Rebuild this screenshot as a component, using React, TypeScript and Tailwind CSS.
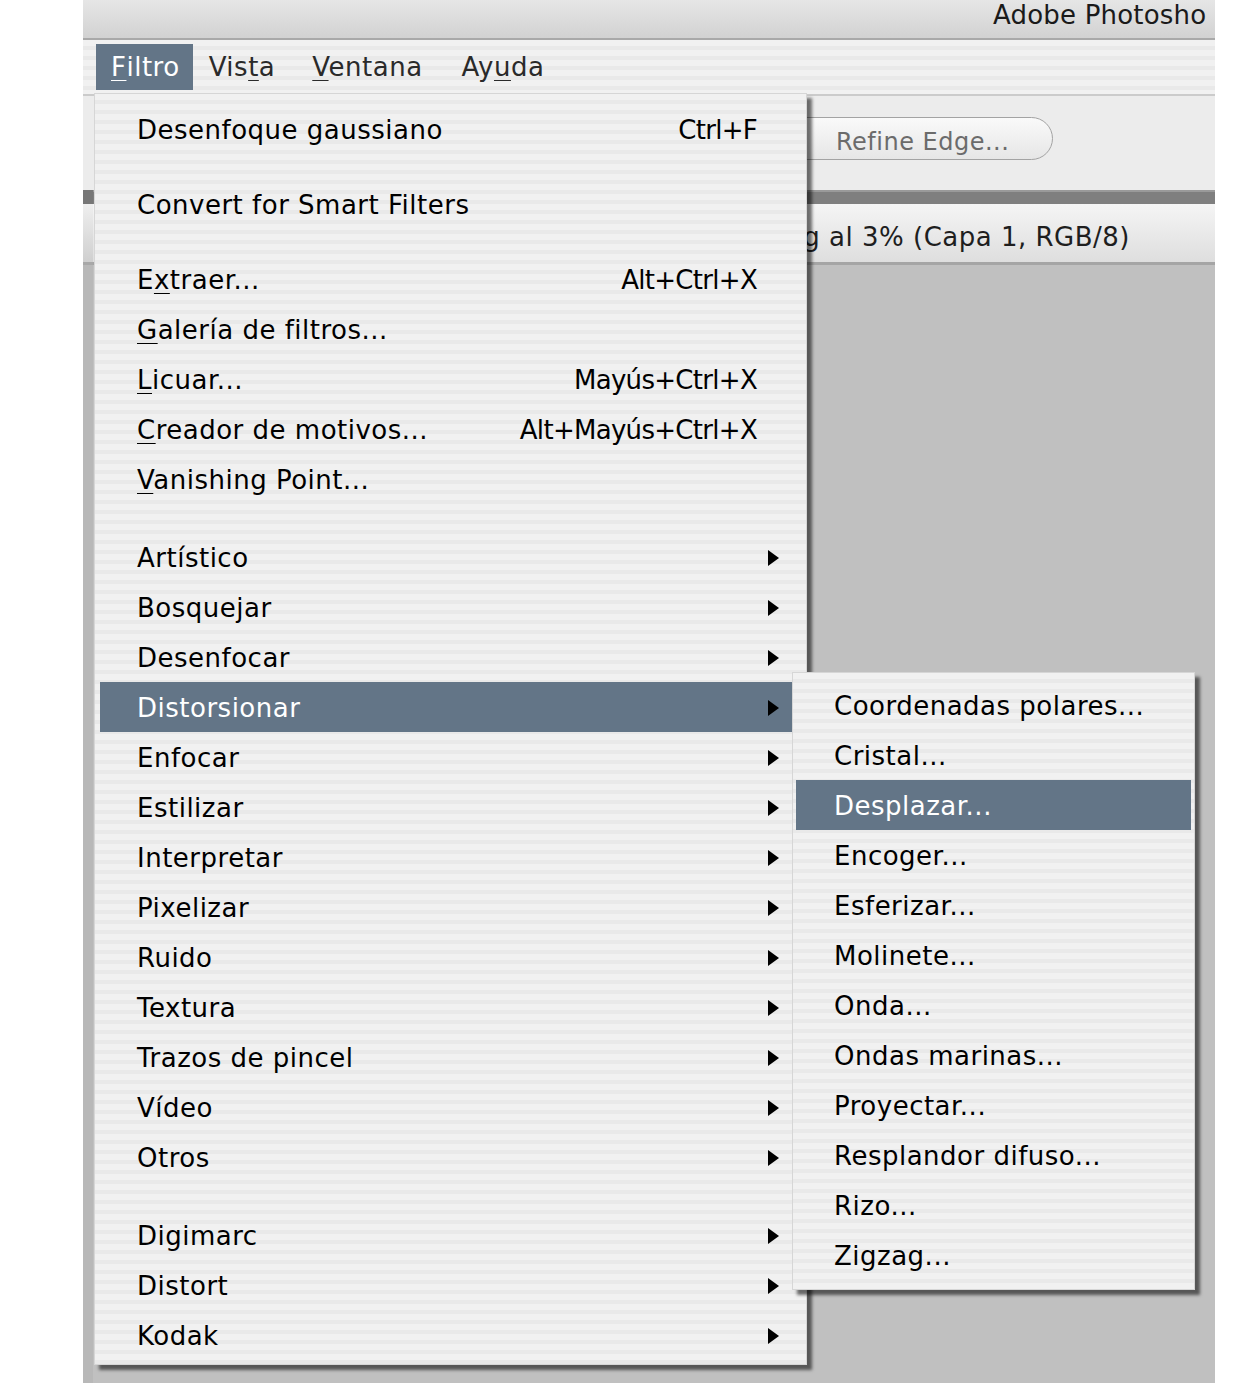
import React from "react";

type Item = { label: React.ReactNode; shortcut?: string; sub?: boolean; active?: boolean };

function Arrow() {
  return (
    <svg width="11" height="16" viewBox="0 0 11 16">
      <path d="M0 0 L11 8 L0 16 Z" fill="#000" />
    </svg>
  );
}

function U({ children }: { children: React.ReactNode }) {
  return <span className="underline decoration-1 underline-offset-[4px]">{children}</span>;
}

const mainItems: (Item | "sep" | "sep2")[] = [
  { label: "Desenfoque gaussiano", shortcut: "Ctrl+F" },
  "sep",
  { label: "Convert for Smart Filters" },
  "sep",
  { label: <>E<U>x</U>traer...</>, shortcut: "Alt+Ctrl+X" },
  { label: <><U>G</U>alería de filtros...</> },
  { label: <><U>L</U>icuar...</>, shortcut: "Mayús+Ctrl+X" },
  { label: <><U>C</U>reador de motivos...</>, shortcut: "Alt+Mayús+Ctrl+X" },
  { label: <><U>V</U>anishing Point...</> },
  "sep2",
  { label: "Artístico", sub: true },
  { label: "Bosquejar", sub: true },
  { label: "Desenfocar", sub: true },
  { label: "Distorsionar", sub: true, active: true },
  { label: "Enfocar", sub: true },
  { label: "Estilizar", sub: true },
  { label: "Interpretar", sub: true },
  { label: "Pixelizar", sub: true },
  { label: "Ruido", sub: true },
  { label: "Textura", sub: true },
  { label: "Trazos de pincel", sub: true },
  { label: "Vídeo", sub: true },
  { label: "Otros", sub: true },
  "sep2",
  { label: "Digimarc", sub: true },
  { label: "Distort", sub: true },
  { label: "Kodak", sub: true },
];

const subItems: Item[] = [
  { label: "Coordenadas polares..." },
  { label: "Cristal..." },
  { label: "Desplazar...", active: true },
  { label: "Encoger..." },
  { label: "Esferizar..." },
  { label: "Molinete..." },
  { label: "Onda..." },
  { label: "Ondas marinas..." },
  { label: "Proyectar..." },
  { label: "Resplandor difuso..." },
  { label: "Rizo..." },
  { label: "Zigzag..." },
];

export default function App() {
  return (
    <div className="min-h-[1396px] bg-white font-['DejaVu_Sans',sans-serif] text-[26px] tracking-[0.5px] text-black">
      <div className="relative ml-[83px] flex h-[1383px] w-[1132px] flex-col overflow-hidden">
        {/* title bar */}
        <div className="h-[38px] shrink-0 whitespace-nowrap bg-gradient-to-b from-[#e6e6e6] to-[#d2d2d2] pl-[910px] leading-[30px] tracking-[0.2px] text-[#1a1a1a]">
          Adobe Photosho
        </div>
        <div className="h-[2px] shrink-0 bg-[#a9a9a9]" />

        {/* menu bar */}
        <div className="flex h-[54px] shrink-0 items-center bg-[repeating-linear-gradient(to_bottom,#f1f1f1_0px,#f1f1f1_6px,#e9e9e9_6px,#e9e9e9_10px)] text-[#2a2a2a]">
          <div className="ml-[13px] flex h-[46px] items-center bg-[#637587] pl-[15px] pr-[13px] text-white">
            <U>F</U>iltro
          </div>
          <div className="pl-[16px] pr-[37px]">
            Vis<U>t</U>a
          </div>
          <div className="pr-[39px]">
            <U>V</U>entana
          </div>
          <div>
            Ay<U>u</U>da
          </div>
        </div>
        <div className="h-[2px] shrink-0 bg-[#cbcbcb]" />

        {/* workspace */}
        <div className="flex flex-1">
          <div className="flex w-[10px] flex-col">
            <div className="h-[94px] bg-[#ececec]" />
            <div className="h-[14px] bg-[#777777]" />
            <div className="h-[58px] bg-gradient-to-b from-[#efefef] to-[#cfcfcf]" />
            <div className="h-[3px] bg-[#a8a8a8]" />
            <div className="flex-1 bg-[#b8b8b8]" />
          </div>
          <div className="flex flex-1 flex-col">
            <div className="h-[94px] bg-[#ececec] pt-[21px]">
              <div className="ml-[627px] flex h-[43px] w-[333px] items-center rounded-r-full border border-[#a3a3a3] bg-gradient-to-b from-[#fafafa] to-[#e6e6e6] pl-[115px] pt-[6px] text-[24px] text-[#6b6b6b]">
                Refine Edge...
              </div>
            </div>
            <div className="h-[14px] border-t-2 border-[#9a9a9a] bg-[#7f7f7f]" />
            <div className="flex h-[58px] items-center justify-end whitespace-nowrap bg-gradient-to-b from-[#f5f5f5] to-[#dedede] pr-[85px] pt-[8px] text-[#1e1e1e]">
              Sin título-1.jpg al 3% (Capa 1, RGB/8)
            </div>
            <div className="h-[3px] bg-[#a5a5a5]" />
            <div className="flex-1 bg-[#c0c0c0]" />
          </div>
        </div>

        {/* main Filtro menu */}
        <div className="absolute left-[11px] top-[93px] w-[713px] border border-[#d6d6d6] bg-[repeating-linear-gradient(to_bottom,#f1f1f1_0px,#f1f1f1_6px,#e9e9e9_6px,#e9e9e9_10px)] pb-[4px] pt-[10px] shadow-[5px_5px_3px_rgba(0,0,0,0.55)]">
          {mainItems.map((it, i) => {
            if (it === "sep") return <div key={i} className="h-[25px]" />;
            if (it === "sep2") return <div key={i} className="h-[28px]" />;
            return (
              <div
                key={i}
                className={
                  it.active
                    ? "mx-[5px] flex h-[50px] items-center bg-[#637587] pl-[37px] pt-[2px] text-white"
                    : "mx-[5px] flex h-[50px] items-center pl-[37px] pt-[2px]"
                }
              >
                <div className="flex-1 whitespace-nowrap">{it.label}</div>
                {it.shortcut && <div className="whitespace-nowrap tracking-[-0.7px]">{it.shortcut}</div>}
                <div className="flex w-[44px] items-center pl-[11px]">{it.sub && <Arrow />}</div>
              </div>
            );
          })}
        </div>

        {/* Distorsionar submenu */}
        <div className="absolute left-[709px] top-[672px] w-[403px] border border-[#d6d6d6] bg-[repeating-linear-gradient(to_bottom,#f1f1f1_0px,#f1f1f1_6px,#e9e9e9_6px,#e9e9e9_10px)] pb-[9px] pt-[7px] shadow-[5px_5px_3px_rgba(0,0,0,0.55)]">
          {subItems.map((it, i) => (
            <div
              key={i}
              className={
                it.active
                  ? "mx-[3px] flex h-[50px] items-center bg-[#637587] pl-[38px] pt-[2px] text-white"
                  : "mx-[3px] flex h-[50px] items-center pl-[38px] pt-[2px]"
              }
            >
              {it.label}
            </div>
          ))}
        </div>
      </div>
    </div>
  );
}
